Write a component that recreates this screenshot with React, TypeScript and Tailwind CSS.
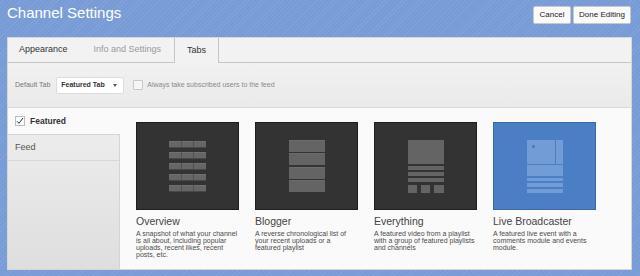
const CARDS = [
    {
        title: "Overview",
        lines: ["A snapshot of what your channel", "is all about, including popular", "uploads, recent likes, recent", "posts, etc."],
        kind: "overview",
    },
    {
        title: "Blogger",
        lines: ["A reverse chronological list of", "your recent uploads or a", "featured playlist"],
        kind: "blogger",
    },
    {
        title: "Everything",
        lines: ["A featured video from a playlist", "with a group of featured playlists", "and channels"],
        kind: "everything",
    },
    {
        title: "Live Broadcaster",
        lines: ["A featured live event with a", "comments module and events", "module."],
        kind: "live",
    },
];

function Thumb({ kind }: { kind: string }) {
    if (kind === "overview") {
        return (
            <div className="flex flex-col gap-[4px]">
                {[0, 1, 2, 3, 4].map((r) => (
                    <div key={r} className="flex gap-px bg-[#505050] border-b border-[#484848]">
                        {[0, 1, 2].map((c) => (
                            <div key={c} className="w-[11.5px] h-[6px] bg-[#666] border-t border-[#707070]" />
                        ))}
                    </div>
                ))}
            </div>
        );
    }
    if (kind === "blogger") {
        return (
            <div className="flex flex-col gap-[1.5px]">
                {[0, 1, 2, 3].map((r) => (
                    <div key={r} className="w-[36px] h-[12px] bg-[#646464] border-t border-[#6c6c6c]" />
                ))}
            </div>
        );
    }
    if (kind === "everything") {
        return (
            <div className="flex flex-col w-[36px]">
                <div className="h-[24px] bg-[#646464]" />
                <div className="mt-[2px] h-[4px] bg-[#646464]" />
                <div className="mt-[2px] h-[4px] bg-[#646464]" />
                <div className="mt-[2px] h-[4px] bg-[#646464]" />
                <div className="mt-[3px] flex justify-between">
                    <div className="w-[9px] h-[8px] bg-[#646464]" />
                    <div className="w-[9px] h-[8px] bg-[#646464]" />
                    <div className="w-[10px] h-[8px] bg-[#646464]" />
                </div>
            </div>
        );
    }
    return (
        <div className="flex flex-col w-[36px]">
            <div className="flex gap-px h-[24px]">
                <div className="w-[28px] bg-[#729cd5] pt-[5px] pl-[5px]">
                    <div className="w-[3px] h-[3px] rounded-full bg-[#4577bd]" />
                </div>
                <div className="flex-1 bg-[#729cd5]" />
            </div>
            <div className="mt-px h-[11px] bg-[#729cd5]" />
            <div className="mt-[2px] h-[3px] bg-[#729cd5]" />
            <div className="mt-[2px] h-[4px] bg-[#729cd5]" />
            <div className="mt-[2px] h-[4px] bg-[#729cd5]" />
        </div>
    );
}

export default function App() {
    return (
        <div className="w-[640px] h-[276px] overflow-hidden flex flex-col bg-[#7b9ed7] bg-[repeating-linear-gradient(135deg,#789bd5_0px,#789bd5_2px,#80a2da_2px,#80a2da_3px)] font-['Liberation_Sans',Arial,sans-serif]">
            {/* header */}
            <div className="h-[37px] flex items-start justify-between pl-[7px] pr-[9px]">
                <h1 className="mt-[4px] text-[15px] leading-[17px] text-white">Channel Settings</h1>
                <div className="mt-[6px] flex gap-[2px]">
                    <button className="w-[38px] h-[18px] bg-[#fafafa] border border-[#c9c9c9] rounded-[2px] text-[8px] text-[#222]">
                        Cancel
                    </button>
                    <button className="w-[58px] h-[18px] bg-[#fafafa] border border-[#c9c9c9] rounded-[2px] text-[8px] text-[#222]">
                        Done Editing
                    </button>
                </div>
            </div>

            {/* panel */}
            <div className="ml-[7px] w-[625px] h-[233px] flex flex-col bg-[#fafafa] border border-[#d6d6d6]">
                <div className="h-[25px] flex items-stretch bg-[#f2f2f2] border-b border-[#c6c6c6] text-[9px]">
                    <div className="flex items-center pl-[11px] pr-[13px] text-[#333]">Appearance</div>
                    <div className="flex items-center px-[13px] text-[#9a9a9a]">Info and Settings</div>
                    <div className="flex items-center px-[12px] -mb-px bg-[#f2f2f2] border-x border-[#c6c6c6] text-[#333]">Tabs</div>
                </div>

                <div className="h-[45px] flex items-center pl-[7px] bg-[linear-gradient(#f1f1f1,#eaeaea)] border-b border-[#d9d9d9]">
                    <span className="text-[7px] text-[#777]">Default Tab</span>
                    <div className="ml-[6px] w-[68px] h-[17px] flex items-center justify-between pl-[4px] pr-[6px] bg-white border border-[#dcdcdc] rounded-[2px]">
                        <span className="text-[7px] font-bold text-[#333]">Featured Tab</span>
                        <span className="w-0 h-0 border-x-[2.5px] border-x-transparent border-t-[3px] border-t-[#555]" />
                    </div>
                    <div className="ml-[9px] w-[10px] h-[10px] bg-[#f6f6f6] border border-[#c8c8c8] rounded-[1px]" />
                    <span className="ml-[4px] text-[7px] text-[#8a8a8a]">Always take subscribed users to the feed</span>
                </div>

                <div className="flex-1 flex min-h-0">
                    <div className="w-[112px] flex flex-col">
                        <div className="h-[26px] flex items-center pl-[7px] gap-[5px]">
                            <div className="w-[10px] h-[10px] bg-white border border-[#bdbdbd] flex items-center justify-center">
                                <svg width="8" height="8" viewBox="0 0 8 8">
                                    <path d="M1 4.2 L3 6.3 L7 1" fill="none" stroke="#333" strokeWidth="1" />
                                </svg>
                            </div>
                            <span className="text-[8.5px] font-bold text-[#333]">Featured</span>
                        </div>
                        <div className="flex-1 bg-[linear-gradient(#ececec,#dedede)] border-t border-r border-[#d4d4d4]">
                            <div className="h-[26px] flex items-center pl-[7px] border-b border-[#d8d8d8] text-[9px] text-[#555]">
                                Feed
                            </div>
                        </div>
                    </div>

                    <div className="flex-1 flex gap-4 pl-[16px] pt-[14px]">
                        {CARDS.map((card) => (
                            <div key={card.title} className="w-[103px] flex flex-col">
                                <div
                                    className={
                                        card.kind === "live"
                                            ? "h-[88px] flex items-center justify-center bg-[#4b7fc5] border border-[#3b69a8]"
                                            : "h-[88px] flex items-center justify-center bg-[#333] border border-[#1e1e1e]"
                                    }
                                >
                                    <Thumb kind={card.kind} />
                                </div>
                                <div className="mt-[5px] text-[10.5px] leading-[12px] text-[#444] whitespace-nowrap">{card.title}</div>
                                <div className="mt-[3px] text-[7px] leading-[7px] text-[#4a4a4a]">
                                    {card.lines.map((l) => (
                                        <div key={l} className="whitespace-nowrap">
                                            {l}
                                        </div>
                                    ))}
                                </div>
                            </div>
                        ))}
                    </div>
                </div>
            </div>
        </div>
    );
}
